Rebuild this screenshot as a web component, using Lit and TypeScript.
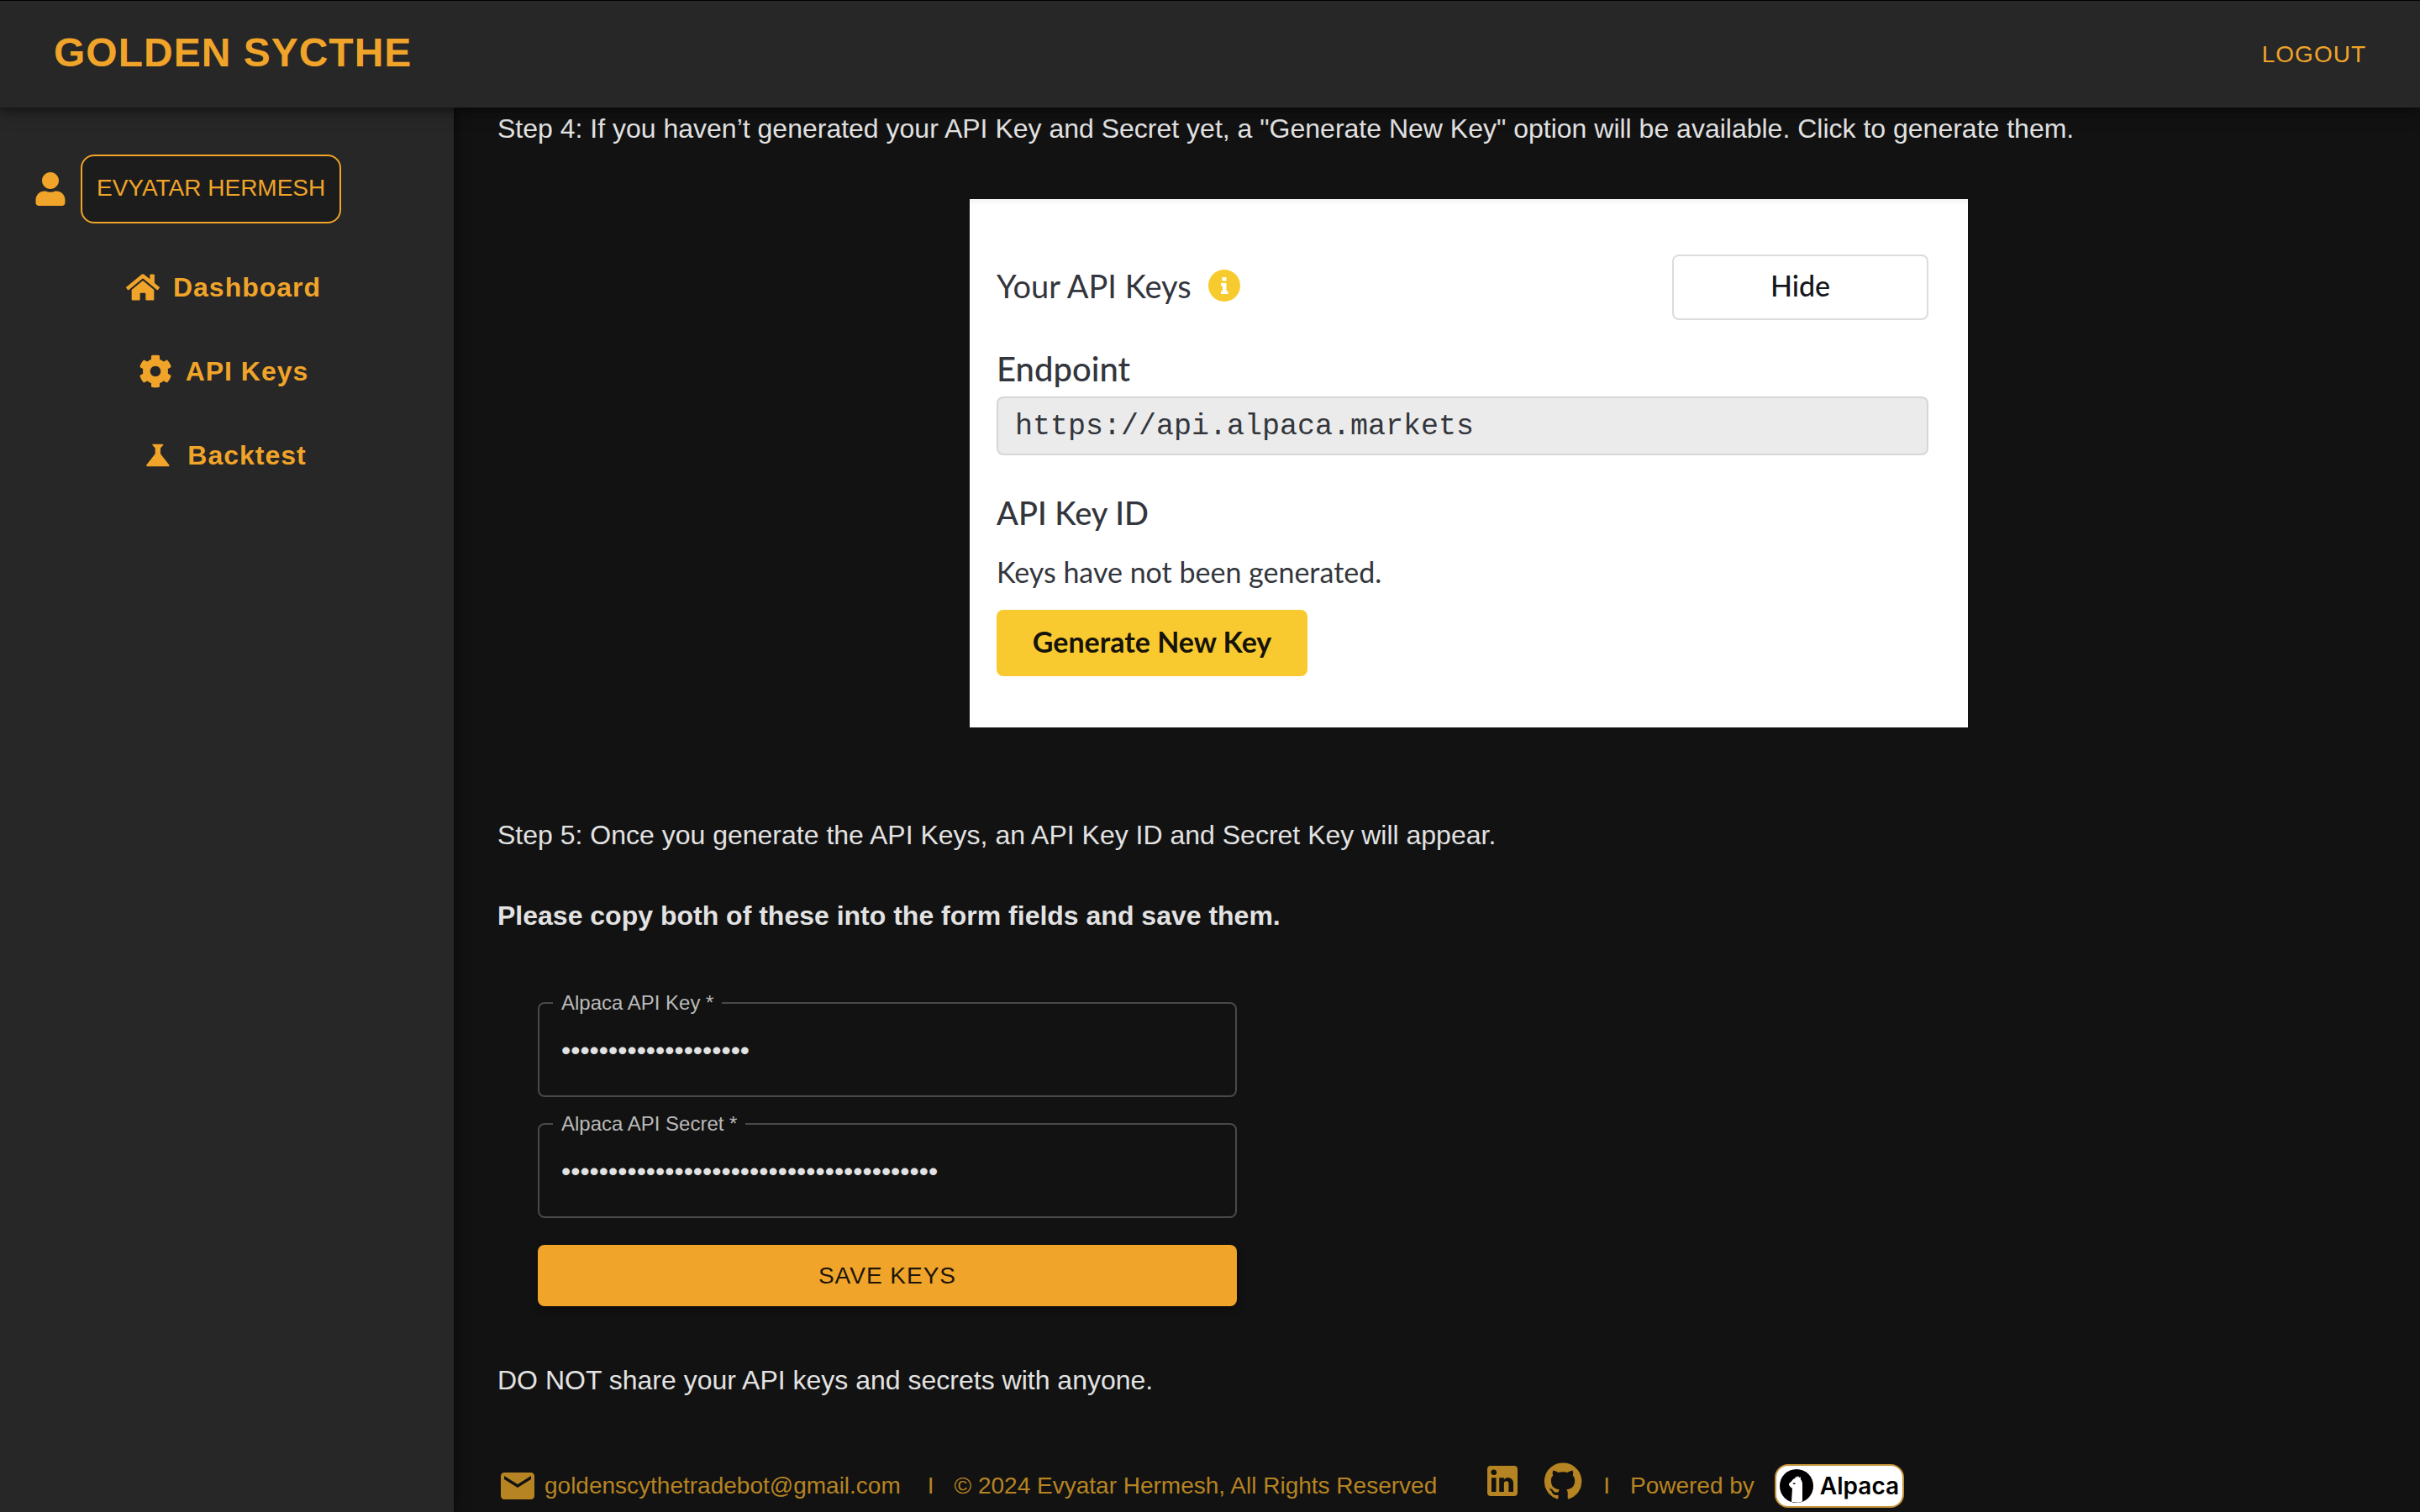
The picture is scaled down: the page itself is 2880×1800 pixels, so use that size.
import { LitElement, html, css, svg } from "lit";
import { customElement, property } from "lit/decorators.js";

const icons = {
  user: {
    box: "0 0 448 512",
    d: "M224 256c70.7 0 128-57.3 128-128S294.7 0 224 0 96 57.3 96 128s57.3 128 128 128zm89.6 32h-16.7c-22.2 10.2-46.9 16-72.9 16s-50.6-5.8-72.9-16h-16.7C60.2 288 0 348.2 0 422.4V464c0 26.5 21.5 48 48 48h352c26.5 0 48-21.5 48-48v-41.6c0-74.2-60.2-134.4-134.4-134.4z",
  },
  home: {
    box: "0 0 576 512",
    d: "M280.37 148.26L96 300.11V464a16 16 0 0 0 16 16l112.06-.29a16 16 0 0 0 15.92-16V368a16 16 0 0 1 16-16h64a16 16 0 0 1 16 16v95.64a16 16 0 0 0 16 16.05L464 480a16 16 0 0 0 16-16V300L295.67 148.26a12.19 12.19 0 0 0-15.3 0zM571.6 251.47L488 182.56V44.05a12 12 0 0 0-12-12h-56a12 12 0 0 0-12 12v72.61L318.47 43a48 48 0 0 0-61 0L4.34 251.47a12 12 0 0 0-1.6 16.9l25.5 31A12 12 0 0 0 45.15 301l235.22-193.74a12.19 12.19 0 0 1 15.3 0L530.9 301a12 12 0 0 0 16.9-1.6l25.5-31a12 12 0 0 0-1.7-16.93z",
  },
  cog: {
    box: "0 0 512 512",
    d: "M487.4 315.7l-42.6-24.6c4.3-23.2 4.3-47 0-70.2l42.6-24.6c4.9-2.8 7.1-8.6 5.5-14-11.1-35.6-30-67.8-54.7-94.6-3.8-4.1-10-5.1-14.8-2.3L380.8 110c-17.9-15.4-38.5-27.3-60.8-35.1V25.8c0-5.6-3.9-10.5-9.4-11.7-36.7-8.2-74.3-7.8-109.2 0-5.5 1.2-9.4 6.1-9.4 11.7V75c-22.2 7.9-42.8 19.8-60.8 35.1L88.7 85.5c-4.9-2.8-11-1.9-14.8 2.3-24.7 26.7-43.6 58.9-54.7 94.6-1.7 5.4.6 11.2 5.5 14L67.3 221c-4.3 23.2-4.3 47 0 70.2l-42.6 24.6c-4.9 2.8-7.1 8.6-5.5 14 11.1 35.6 30 67.8 54.7 94.6 3.8 4.1 10 5.1 14.8 2.3l42.6-24.6c17.9 15.4 38.5 27.3 60.8 35.1v49.2c0 5.6 3.9 10.5 9.4 11.7 36.7 8.2 74.3 7.8 109.2 0 5.5-1.2 9.4-6.1 9.4-11.7v-49.2c22.2-7.9 42.8-19.8 60.8-35.1l42.6 24.6c4.9 2.8 11 1.9 14.8-2.3 24.7-26.7 43.6-58.9 54.7-94.6 1.5-5.5-.7-11.3-5.6-14.1zM256 336c-44.1 0-80-35.9-80-80s35.9-80 80-80 80 35.9 80 80-35.9 80-80 80z",
  },
  flask: {
    box: "0 0 24 24",
    d: "M9 4h7c.4 0 .6.5.3.8L14.4 6.9v4L20.5 18.700c.4.6.1 1.300-.6 1.300H5.100c-.7 0-1-.7-.6-1.300L10.600 10.900v-4L8.700 4.800C8.400 4.500 8.600 4 9 4z",
  },
  mail: {
    box: "0 0 24 24",
    d: "M20 4H4c-1.1 0-1.99.9-1.99 2L2 18c0 1.1.9 2 2 2h16c1.1 0 2-.9 2-2V6c0-1.1-.9-2-2-2zm0 4l-8 5-8-5V6l8 5 8-5v2z",
  },
  linkedin: {
    box: "0 0 24 24",
    d: "M19 3a2 2 0 0 1 2 2v14a2 2 0 0 1-2 2H5a2 2 0 0 1-2-2V5a2 2 0 0 1 2-2h14m-.5 15.5v-5.3a3.26 3.26 0 0 0-3.26-3.26c-.85 0-1.84.52-2.32 1.3v-1.11h-2.79v8.37h2.79v-4.93c0-.77.62-1.4 1.39-1.4a1.4 1.4 0 0 1 1.4 1.4v4.93h2.79M6.88 8.56a1.68 1.68 0 0 0 1.68-1.68c0-.93-.75-1.69-1.68-1.69a1.69 1.69 0 0 0-1.69 1.69c0 .93.76 1.68 1.69 1.68m1.39 9.94v-8.37H5.5v8.37h2.77z",
  },
  github: {
    box: "0 0 24 24",
    d: "M12 1.27a11 11 0 00-3.48 21.46c.55.09.73-.28.73-.55v-1.84c-3.03.64-3.67-1.46-3.67-1.46-.55-1.29-1.28-1.65-1.28-1.65-.92-.65.1-.65.1-.65 1.1 0 1.73 1.1 1.73 1.1.92 1.65 2.57 1.2 3.21.92a2 2 0 01.64-1.47c-2.47-.27-5.04-1.19-5.04-5.5 0-1.1.46-2.1 1.2-2.84a3.76 3.76 0 010-2.93s.91-.28 3.11 1.1c1.8-.49 3.7-.49 5.5 0 2.1-1.38 3.02-1.1 3.02-1.1a3.76 3.76 0 01.1 2.93c.83.74 1.2 1.74 1.2 2.94 0 4.21-2.57 5.13-5.04 5.4.45.37.82.92.82 2.02v3.03c0 .27.1.64.73.55A11 11 0 0012 1.27",
  },
};

type IconName = keyof typeof icons;

@customElement("app-icon")
class AppIcon extends LitElement {
  static styles = css`
    :host {
      display: inline-flex;
      flex: none;
      width: 40px;
      height: 40px;
    }
    svg {
      width: 100%;
      height: 100%;
      fill: currentColor;
    }
  `;

  @property() name: IconName = "home";

  render() {
    const icon = icons[this.name];
    return html`<svg viewBox=${icon.box} aria-hidden="true">${svg`<path d=${icon.d}></path>`}</svg>`;
  }
}

@customElement("key-preview")
class KeyPreview extends LitElement {
  static styles = css`
    :host {
      display: block;
      box-sizing: border-box;
      width: 1188px;
      max-width: 100%;
      padding: 66px 47px 61px 32px;
      background: linear-gradient(#f4f4f4, #ffffff 8px);
      color: #33363c;
      font-family: Lato, "Liberation Sans", sans-serif;
      font-size: 34px;
      line-height: 40px;
    }
    .top {
      display: flex;
      align-items: center;
      justify-content: space-between;
    }
    .heading {
      display: flex;
      align-items: center;
      gap: 20px;
      margin: 0;
      padding-bottom: 4px;
      font-size: 38px;
      font-weight: 400;
    }
    .info {
      width: 38px;
      height: 38px;
    }
    .hide {
      box-sizing: border-box;
      width: 305px;
      height: 78px;
      padding: 0 0 4px;
      border: 2px solid #dcdcdc;
      border-radius: 8px;
      background: #ffffff;
      color: #15171c;
      font: 500 34px/40px Lato, "Liberation Sans", sans-serif;
    }
    .label {
      display: block;
      margin: 38px 0 13px;
      font-size: 40px;
      font-weight: 500;
    }
    .endpoint {
      box-sizing: border-box;
      display: block;
      width: 100%;
      height: 70px;
      padding: 2px 20px 0;
      border: 2px solid #d6d6d6;
      border-radius: 8px;
      background: #ebebeb;
      color: #33363c;
      font: 35px/40px "Liberation Mono", monospace;
    }
    .key-title {
      margin: 48px 0 0;
      font-size: 38px;
      font-weight: 500;
    }
    .empty {
      margin: 31px 0 25px;
    }
    .generate {
      display: block;
      width: 370px;
      height: 79px;
      padding: 0 0 4px;
      border: 0;
      border-radius: 8px;
      background: #f9ca30;
      color: #15130a;
      font: 700 34px/40px Lato, "Liberation Sans", sans-serif;
    }
  `;

  render() {
    return html`
      <div class="top">
        <h2 class="heading">
          Your API Keys
          <svg class="info" viewBox="0 0 38 38" aria-hidden="true">
            <circle cx="19" cy="19" r="19" fill="#f7cb2d"></circle>
            <path
              fill="#ffffff"
              d="M16.500 9h5v4.500h-5zM15 16h6.500v9.500h2V29H15v-3.500h2v-6h-2z"
            ></path>
          </svg>
        </h2>
        <button class="hide" type="button">Hide</button>
      </div>
      <label class="label" for="endpoint">Endpoint</label>
      <input class="endpoint" id="endpoint" readonly value="https://api.alpaca.markets" />
      <h3 class="key-title">API Key ID</h3>
      <p class="empty">Keys have not been generated.</p>
      <button class="generate" type="button">Generate New Key</button>
    `;
  }
}

@customElement("app-root")
class AppRoot extends LitElement {
  static styles = css`
    :host {
      --gold: #f0a429;
      --gold-dim: #b68422;
      --surface: #272727;
      --page: #121212;
      --sans: "Liberation Sans", Arial, sans-serif;
      display: flex;
      flex-direction: column;
      min-height: 100vh;
      background: var(--page);
      color: #e2e2e2;
      font: 32px/48px var(--sans);
    }
    .bar {
      box-sizing: border-box;
      position: relative;
      z-index: 2;
      display: flex;
      align-items: center;
      justify-content: space-between;
      height: 128px;
      padding: 0 64px;
      border-top: 1px solid #000000;
      background: var(--surface);
      box-shadow: 0 4px 8px rgba(0, 0, 0, 0.3), 0 8px 20px rgba(0, 0, 0, 0.2);
    }
    .brand {
      margin: 0;
      padding-bottom: 4px;
      color: var(--gold);
      font-size: 48px;
      font-weight: 700;
      letter-spacing: 1px;
    }
    .logout {
      padding: 0;
      border: 0;
      background: none;
      color: var(--gold);
      font: 28px/48px var(--sans);
      letter-spacing: 1px;
    }
    .body {
      display: flex;
      flex: 1;
    }
    .side {
      box-sizing: border-box;
      position: relative;
      z-index: 1;
      flex: none;
      width: 540px;
      padding: 56px 8px 0 0;
      background: var(--surface);
      box-shadow: 2px 0 12px rgba(0, 0, 0, 0.5);
    }
    .account {
      display: flex;
      align-items: center;
      gap: 16px;
      padding-left: 40px;
      color: var(--gold);
    }
    .name {
      box-sizing: border-box;
      height: 82px;
      padding: 0 17px 2px;
      border: 2px solid var(--gold);
      border-radius: 16px;
      background: #1c1c1c;
      color: var(--gold);
      font: 28px/48px var(--sans);
    }
    .nav {
      display: flex;
      flex-direction: column;
      align-items: center;
      gap: 52px;
      margin-top: 52px;
    }
    .link {
      display: flex;
      align-items: center;
      gap: 16px;
      color: var(--gold);
      font-weight: 700;
      letter-spacing: 1px;
      text-decoration: none;
    }
    .main {
      flex: 1;
      min-width: 0;
      padding: 1px 0 0 52px;
    }
    .text {
      margin: 0;
    }
    .shot {
      display: flex;
      justify-content: center;
      margin: 60px 0 104px;
      padding-left: 24px;
    }
    .strong {
      margin: 48px 0 68px;
      font-weight: 700;
    }
    .form {
      display: flex;
      flex-direction: column;
      gap: 20px;
      box-sizing: border-box;
      width: 832px;
      max-width: 100%;
      margin: 0 0 64px 48px;
    }
    .field {
      min-width: 0;
      margin: 0;
      padding: 0 16px 10px;
      border: 2px solid #494949;
      border-radius: 8px;
    }
    .legend {
      padding: 0 10px;
      color: #b9b9b9;
      font-size: 24px;
      line-height: 24px;
    }
    .secret {
      box-sizing: border-box;
      display: block;
      width: 100%;
      height: 88px;
      padding: 0 10px;
      border: 0;
      outline: 0;
      background: transparent;
      color: #e2e2e2;
      font: 32px/48px var(--sans);
    }
    .save {
      height: 73px;
      margin-top: 12px;
      border: 0;
      border-radius: 8px;
      background: var(--gold);
      color: #1c1608;
      font: 28px/48px var(--sans);
      letter-spacing: 1px;
      box-shadow: 0 4px 10px rgba(0, 0, 0, 0.4);
    }
    .footer {
      display: flex;
      align-items: center;
      margin-top: 72px;
      color: var(--gold-dim);
      font-size: 28px;
    }
    .mail {
      display: flex;
      align-items: center;
      gap: 8px;
      margin-right: 8px;
      color: inherit;
      text-decoration: none;
    }
    .large {
      width: 48px;
      height: 48px;
    }
    .sep {
      padding: 0 24px;
    }
    .social {
      display: flex;
      gap: 24px;
      margin: 0 0 12px 54px;
      color: inherit;
    }
    .social-link {
      display: flex;
      color: inherit;
    }
    .badge {
      box-sizing: border-box;
      display: flex;
      align-items: center;
      gap: 8px;
      height: 52px;
      margin-left: 24px;
      padding: 0 4px;
      border: 2px solid #c59339;
      border-radius: 16px;
      background: #ffffff;
      color: #000000;
      font: 600 28px/40px Inter, "Liberation Sans", sans-serif;
      text-decoration: none;
    }
    .logo {
      width: 40px;
      height: 40px;
    }
  `;

  render() {
    return html`
      <header class="bar">
        <h1 class="brand">GOLDEN SYCTHE</h1>
        <button class="logout" type="button">LOGOUT</button>
      </header>
      <div class="body">
        <aside class="side">
          <div class="account">
            <app-icon name="user"></app-icon>
            <button class="name" type="button">EVYATAR HERMESH</button>
          </div>
          <nav class="nav">
            ${this.link("home", "Dashboard")} ${this.link("cog", "API Keys")}
            ${this.link("flask", "Backtest")}
          </nav>
        </aside>
        <main class="main">
          <p class="text">
            Step 4: If you haven’t generated your API Key and Secret yet, a "Generate New Key"
            option will be available. Click to generate them.
          </p>
          <div class="shot"><key-preview></key-preview></div>
          <p class="text">
            Step 5: Once you generate the API Keys, an API Key ID and Secret Key will appear.
          </p>
          <p class="strong">Please copy both of these into the form fields and save them.</p>
          <form class="form">
            ${this.field("api-key", "Alpaca API Key", 20)}
            ${this.field("api-secret", "Alpaca API Secret", 40)}
            <button class="save" type="button">SAVE KEYS</button>
          </form>
          <p class="text">DO NOT share your API keys and secrets with anyone.</p>
          <footer class="footer">
            <a class="mail" href="mailto:goldenscythetradebot@gmail.com">
              <app-icon class="large" name="mail"></app-icon>
              goldenscythetradebot@gmail.com
            </a>
            <span class="sep">I</span>
            <span>© 2024 Evyatar Hermesh, All Rights Reserved</span>
            <span class="social">
              <a class="social-link" href="#linkedin" aria-label="LinkedIn">
                <app-icon class="large" name="linkedin"></app-icon>
              </a>
              <a class="social-link" href="#github" aria-label="GitHub">
                <app-icon class="large" name="github"></app-icon>
              </a>
            </span>
            <span class="sep">I</span>
            <span>Powered by</span>
            <a class="badge" href="#alpaca">
              <svg class="logo" viewBox="0 0 40 40" aria-hidden="true">
                <circle cx="20" cy="20" r="20" fill="#000000"></circle>
                <path
                  fill="#ffffff"
                  d="M14 39.100L15 23l-2-1.500-2-2.500c-.3-1.500.5-2.700 2-3.500l3-3.500 2.500-1.300.5-2.200 1.500 1.200 1.500-1.700 1 2 1.800-.8.200 3c1.500 1.500 2 3.500 2 6V38.200c-1.500.8-3 1.300-5 1.600z"
                ></path>
                <path fill="#000000" d="M15.500 16.500h3v1.500h-2z"></path>
              </svg>
              Alpaca
            </a>
          </footer>
        </main>
      </div>
    `;
  }

  private link(icon: IconName, text: string) {
    return html`<a class="link" href="#${icon}"><app-icon name=${icon}></app-icon>${text}</a>`;
  }

  private field(id: string, text: string, length: number) {
    return html`
      <fieldset class="field">
        <legend class="legend"><label for=${id}>${text} *</label></legend>
        <input class="secret" id=${id} type="password" required .value=${"x".repeat(length)} />
      </fieldset>
    `;
  }
}
